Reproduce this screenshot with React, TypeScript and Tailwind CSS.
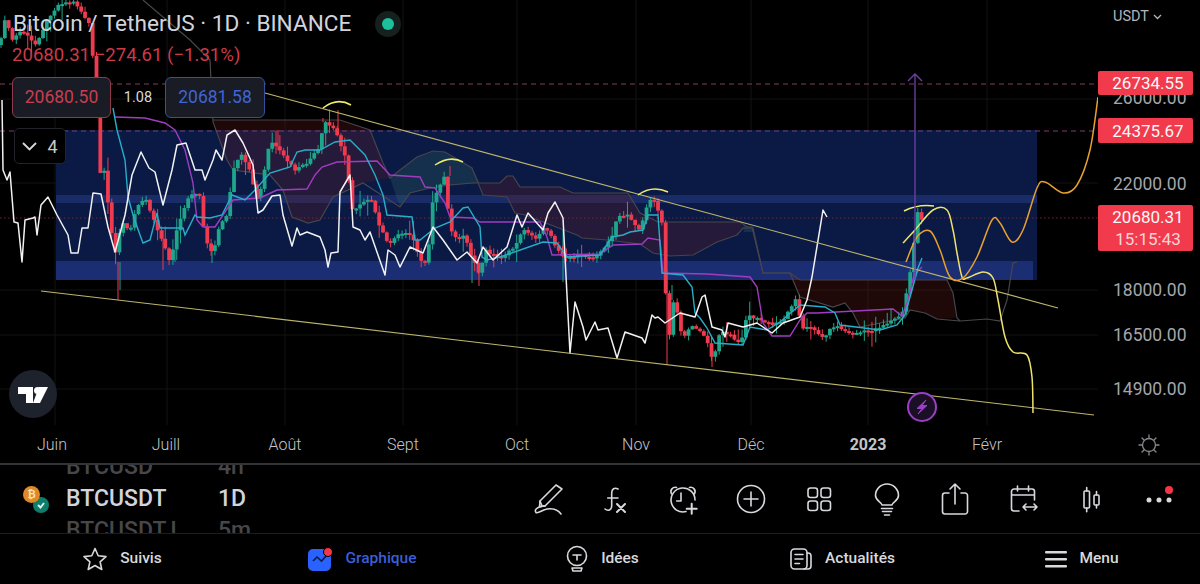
import React from 'react';

type Pt = [number, number];

const line = (pts: Pt[]) => 'M' + pts.map((p) => p.join(' ')).join('L');

// catmull-rom, for the hand drawn curves
const curve = (pts: Pt[]) => {
  let d = `M${pts[0][0]} ${pts[0][1]}`;
  for (let i = 0; i < pts.length - 1; i++) {
    const a = pts[i - 1] || pts[i];
    const b = pts[i];
    const c = pts[i + 1];
    const e = pts[i + 2] || c;
    d += `C${b[0] + (c[0] - a[0]) / 6} ${b[1] + (c[1] - a[1]) / 6} ${c[0] - (e[0] - b[0]) / 6} ${c[1] - (e[1] - b[1]) / 6} ${c[0]} ${c[1]}`;
  }
  return d;
};

const PRICE: Pt[] = [
  [0, 45], [5, 18], [12, 40], [22, 30], [35, 45], [50, 15], [60, 3], [75, 2], [90, 25], [98, 120], [100, 173], [105, 172], [110, 225], [118, 262], [120, 220],
  [130, 232], [137, 205], [145, 197], [152, 215], [160, 235], [170, 262], [178, 225], [190, 195], [200, 195], [205, 240], [213, 253], [220, 225],
  [228, 215], [232, 175], [240, 153], [250, 172], [258, 203], [266, 163], [270, 140], [280, 152], [295, 170], [305, 165], [318, 150], [325, 122],
  [335, 130], [345, 155], [353, 213], [358, 205], [370, 197], [380, 228], [390, 245], [400, 232], [412, 235], [423, 267], [428, 255], [433, 200],
  [445, 175], [450, 230], [460, 240], [465, 232], [470, 255], [480, 275], [485, 250], [500, 258], [512, 250], [525, 228], [535, 240], [545, 225],
  [555, 245], [565, 258], [580, 255], [592, 258], [605, 248], [612, 235], [617, 218], [627, 215], [640, 230], [648, 202], [655, 200], [662, 222],
  [665, 275], [668, 355], [672, 300], [678, 315], [683, 340], [690, 325], [700, 330], [708, 345], [713, 360], [720, 332], [730, 335], [740, 345],
  [747, 315], [760, 320], [773, 325], [785, 318], [797, 295], [801, 330], [812, 326], [822, 338], [835, 325], [850, 334], [863, 332], [873, 330],
  [887, 323], [897, 318], [903, 312], [907, 290], [911, 267], [915, 235], [918, 210], [922, 220],
];

const WHITE: Pt[] = [
  [2, 100], [3, 170], [7, 180], [10, 172], [14, 222], [18, 223], [22, 262], [25, 220], [33, 218], [35, 217], [37, 235], [41, 205], [48, 197], [57, 215],
  [68, 235], [71, 253], [78, 253], [82, 228], [88, 228], [93, 193], [101, 194], [108, 227], [115, 252], [125, 215], [132, 175], [141, 152], [149, 168],
  [155, 172], [163, 205], [172, 170], [177, 145], [186, 143], [195, 170], [202, 170], [205, 180], [213, 160], [216, 150], [222, 160], [227, 135], [235, 130],
  [243, 143], [253, 165], [258, 213], [263, 210], [272, 196], [280, 195], [283, 215], [292, 246], [297, 228], [300, 235], [307, 232], [320, 237], [325, 250],
  [328, 267], [331, 253], [338, 252], [340, 192], [350, 175], [353, 227], [360, 230], [365, 240], [370, 232], [378, 255], [385, 275], [388, 250], [395, 255],
  [400, 267], [410, 247], [423, 253], [433, 227], [443, 240], [450, 250], [457, 260], [467, 252], [477, 263], [483, 247], [493, 260], [507, 247], [517, 215],
  [522, 227], [528, 213], [543, 230], [548, 213], [555, 202], [563, 218], [570, 353], [575, 302], [583, 327], [586, 340], [595, 322], [598, 330], [608, 328],
  [617, 358], [625, 332], [642, 338], [645, 343], [652, 315], [655, 318], [658, 317], [665, 323], [680, 313], [695, 317], [702, 297], [705, 295], [712, 327],
  [722, 330], [725, 337], [728, 323], [743, 327], [757, 323], [772, 333], [783, 323], [800, 317], [807, 300], [812, 277], [823, 210], [827, 217],
];

const CYAN: Pt[] = [
  [113, 108], [117, 130], [125, 160], [128, 197], [133, 215], [140, 235], [143, 243], [150, 240], [157, 213], [160, 228], [183, 228], [185, 235], [195, 215],
  [197, 217], [210, 218], [222, 215], [232, 195], [245, 200], [255, 190], [270, 173], [290, 167], [297, 152], [305, 150], [320, 150], [335, 142], [350, 140],
  [365, 155], [375, 175], [383, 195], [387, 215], [412, 217], [415, 240], [420, 240], [435, 228], [450, 222], [463, 208], [468, 207], [480, 227], [482, 257],
  [487, 260], [500, 257], [543, 242], [557, 243], [567, 257], [600, 255], [612, 237], [623, 235], [630, 232], [643, 230], [648, 215], [658, 215], [662, 273],
  [683, 275], [692, 287], [695, 313], [700, 318], [707, 328], [715, 343], [743, 345], [750, 327], [767, 330], [780, 322], [800, 305], [825, 307], [835, 313],
  [840, 325], [880, 330], [897, 325], [905, 315], [912, 290], [918, 268], [922, 258],
];

const PURPLE: Pt[] = [
  [115, 117], [145, 118], [165, 123], [175, 130], [185, 150], [193, 183], [197, 220], [203, 227], [215, 227], [233, 200], [260, 198], [277, 190], [307, 189],
  [315, 175], [322, 167], [337, 162], [377, 161], [390, 175], [420, 177], [425, 187], [435, 188], [445, 203], [450, 217], [473, 218], [480, 222], [540, 222],
  [547, 237], [552, 255], [600, 254], [613, 245], [642, 244], [648, 238], [660, 240], [663, 273], [707, 274], [750, 277], [757, 287], [763, 323], [772, 336],
  [790, 336], [800, 320], [807, 313], [817, 313], [893, 309], [902, 316], [908, 300], [914, 275], [922, 267],
];

const CLOUD_A: Pt[] = [
  [143, 0], [190, 40], [210, 60], [213, 122], [227, 160], [233, 170], [270, 175], [283, 190], [292, 217], [308, 223], [320, 220], [333, 197], [363, 183],
  [400, 207], [410, 193], [430, 188], [450, 185], [472, 183], [500, 183], [507, 176], [513, 176], [520, 187], [560, 187], [573, 193], [628, 193], [640, 213],
  [658, 222], [740, 222], [747, 227], [752, 227], [763, 273], [790, 273], [800, 297], [833, 307], [845, 303], [853, 313], [860, 327], [905, 318], [910, 310],
  [925, 313], [937, 319], [960, 321], [987, 319], [1000, 321], [1007, 300], [1013, 263], [1017, 262],
];

const CLOUD_B: Pt[] = [
  [213, 120], [340, 120], [370, 130], [383, 163], [390, 178], [400, 170], [417, 157], [433, 151], [445, 152], [472, 168], [483, 195], [507, 197], [515, 213],
  [525, 215], [577, 235], [582, 238], [607, 240], [640, 244], [653, 253], [670, 256], [693, 255], [717, 242], [737, 235], [743, 228], [753, 228], [763, 273],
  [790, 273], [800, 280], [947, 280], [953, 293], [957, 318], [960, 321],
];

// cloud fills, the colour flips where the two spans cross
const CLOUD_FILLS: { pts: Pt[]; fill: string }[] = [
  {
    pts: [[213, 120], [340, 120], [370, 130], [383, 163], [390, 178], [363, 183], [333, 197], [320, 220], [308, 223], [292, 217], [283, 190], [270, 175], [233, 170], [227, 160]],
    fill: '#6a1c1c',
  },
  {
    pts: [[390, 178], [400, 170], [417, 157], [433, 151], [445, 152], [472, 168], [480, 183], [450, 185], [430, 188], [410, 193], [400, 207]],
    fill: '#2f6a62',
  },
  {
    pts: [[480, 183], [500, 183], [507, 176], [513, 176], [520, 187], [560, 187], [573, 193], [628, 193], [640, 213], [658, 222], [740, 222], [743, 228], [737, 235], [717, 242], [693, 255], [670, 256], [653, 253], [640, 244], [607, 240], [582, 238], [577, 235], [525, 215], [515, 213], [507, 197], [483, 195]],
    fill: '#6a1c1c',
  },
  { pts: [[743, 226], [752, 227], [754, 232], [744, 232]], fill: '#2f6a62' },
  {
    pts: [[790, 273], [800, 280], [947, 280], [953, 293], [957, 318], [937, 319], [925, 313], [910, 310], [905, 318], [860, 327], [853, 313], [845, 303], [833, 307], [800, 297]],
    fill: '#6a1c1c',
  },
];

const YELLOW: Pt[] = [
  [903, 243], [915, 230], [933, 210], [947, 210], [953, 230], [957, 253], [962, 277], [967, 278], [983, 272], [993, 278], [998, 300], [1005, 337], [1013, 352],
  [1027, 355], [1032, 377], [1033, 413],
];

const ORANGE: Pt[] = [
  [906, 262], [917, 237], [930, 231], [940, 250], [950, 277], [963, 278], [977, 257], [992, 220], [1000, 223], [1012, 242], [1023, 230], [1037, 188], [1045, 182],
  [1063, 193], [1077, 185], [1090, 150], [1098, 97],
];

const at = (x: number) => {
  for (let i = 0; i < PRICE.length - 1; i++) {
    const [x0, y0] = PRICE[i];
    const [x1, y1] = PRICE[i + 1];
    if (x <= x1) return y0 + ((y1 - y0) * (x - x0)) / (x1 - x0);
  }
  return PRICE[PRICE.length - 1][1];
};

const rnd = (i: number) => {
  const v = Math.sin(i * 12.9898) * 43758.5453;
  return v - Math.floor(v);
};

const GREEN_C = '#1fa58b';
const RED_C = '#ee3b50';

const candles = () => {
  const out: { x: number; top: number; h: number; hi: number; lo: number; up: boolean }[] = [];
  let prev = at(0);
  for (let i = 0; i * 3.82 + 1 < 923; i++) {
    const x = i * 3.82 + 1;
    const close = at(x) + (rnd(i) - 0.5) * 3;
    const up = close < prev;
    const top = Math.min(close, prev);
    const h = Math.max(Math.abs(close - prev), 2);
    const size = rnd(i + 400) > 0.75 ? 14 : 5;
    out.push({ x, top, h, hi: top - rnd(i + 100) * size, lo: top + h + rnd(i + 200) * size, up });
    prev = close;
  }
  return out;
};

const LONG_WICKS: [number, number, number, string][] = [
  [118, 262, 300, RED_C], [120, 262, 290, GREEN_C], [163, 230, 270, RED_C], [175, 250, 262, GREEN_C], [212, 250, 263, GREEN_C],
  [323, 122, 118, RED_C], [338, 110, 130, RED_C], [278, 130, 150, RED_C], [450, 166, 176, RED_C], [472, 250, 283, GREEN_C],
  [479, 270, 286, RED_C], [563, 230, 282, GREEN_C], [667, 270, 365, RED_C], [672, 285, 300, GREEN_C], [712, 355, 367, RED_C],
];

const ChartDrawing: React.FC = () => (
  <svg width="1098" height="425" viewBox="0 0 1098 425" className="block" fill="none">
    {[99, 183, 290, 335, 389].map((y) => (
      <path key={y} d={`M0 ${y}H1098`} stroke="#121212" />
    ))}
    {[55, 167, 285, 403, 517, 636, 751, 868, 987].map((x) => (
      <path key={x} d={`M${x} 0V425`} stroke="#121212" />
    ))}

    <rect x="56" y="130" width="981" height="150" fill="#0a1a45" />
    <rect x="56" y="195" width="981" height="8" fill="#1a2c68" />
    <rect x="56" y="261" width="977" height="19" fill="#1b2e74" />

    {CLOUD_FILLS.map((c, i) => (
      <path key={i} d={line(c.pts) + 'Z'} fill={c.fill} fillOpacity="0.28" />
    ))}
    <path d={line(CLOUD_A)} stroke="#47474c" strokeWidth="1.2" />
    <path d={line(CLOUD_B)} stroke="#47434c" strokeWidth="1.2" />

    <path d="M0 84H1098" stroke="#7e3d5c" strokeDasharray="5 4" />
    <path d="M0 131H1098" stroke="#7e3d6c" strokeDasharray="5 4" />
    <path d="M0 218H1098" stroke="#6e2633" strokeDasharray="1.5 2.5" />

    {LONG_WICKS.map(([x, a, b, c], i) => (
      <path key={i} d={`M${x} ${a}V${b}`} stroke={c} />
    ))}
    {candles().map((k, i) => (
      <g key={i}>
        <path d={`M${k.x} ${k.hi}V${k.lo}`} stroke={k.up ? GREEN_C : RED_C} />
        <rect x={k.x - 1.9} y={k.top} width="3.8" height={k.h} fill={k.up ? GREEN_C : RED_C} />
      </g>
    ))}

    <path d={line(PURPLE)} stroke="#a03cc0" strokeWidth="1.4" />
    <path d={line(CYAN)} stroke="#28aec8" strokeWidth="1.4" />
    <path d={line(WHITE)} stroke="#f2f2f2" strokeWidth="1.5" strokeLinejoin="round" />

    <path d="M265 93L1058 308" stroke="#bdb56c" strokeWidth="1.1" />
    <path d="M41 291L1094 415" stroke="#bdb56c" strokeWidth="1.1" />
    <path d="M323 108Q337 97 351 105M435 165Q450 155 463 162M638 195Q652 185 668 192M904 211Q918 204 934 206" stroke="#ecec6a" strokeWidth="1.5" />
    <path d={curve(YELLOW)} stroke="#eee36e" strokeWidth="1.5" />
    <path d={curve(ORANGE)} stroke="#e8a02e" strokeWidth="1.5" />

    <path d="M915 280V74M908 81L915 74L922 81" stroke="#6f40a8" strokeWidth="1.3" />

    <circle cx="922" cy="407" r="14" fill="#1a0f24" stroke="#9a3fc6" strokeWidth="2" />
    <path d="M926 400L917 408.5H922L918 414L927 405.5H922Z" fill="#9a3fc6" stroke="#9a3fc6" strokeLinejoin="round" />
  </svg>
);

const TvLogo = () => (
  <svg width="48" height="48" viewBox="0 0 48 48">
    <circle cx="24" cy="24" r="24" fill="#1e222d" />
    <path d="M9 17H24V33H17V24H9ZM30 17H39L31 33H24Z" fill="#fff" />
    <circle cx="28.5" cy="20.5" r="3.5" fill="#fff" />
  </svg>
);

const Ico: React.FC<{ w?: number; h?: number; children: React.ReactNode; color?: string }> = ({ w = 32, h = 32, children, color = '#d8d9dd' }) => (
  <svg width={w} height={h} viewBox={`0 0 ${w} ${h}`} fill="none" stroke={color} strokeWidth="1.6" strokeLinecap="round" strokeLinejoin="round">
    {children}
  </svg>
);

const BOTTOM_TOOLS: { key: string; icon: React.ReactNode }[] = [
  {
    key: 'fx',
    icon: (
      <Ico>
        <path d="M19 6C15.500 4 12.700 6 12.700 10V23C12.700 27 9 28.500 6 26M8.700 15H19" />
        <path d="M18 21L26 29M26 21L18 29" strokeWidth="2" />
      </Ico>
    ),
  },
  {
    key: 'alarm',
    icon: (
      <Ico>
        <path d="M19 28.600A12 12 0 1 1 28 17" />
        <path d="M14 10V18H9.700M4.500 11C2.500 7 6 3.500 9.500 4.500M27.500 11C29.500 7 26 3.500 22.500 4.500" />
        <path d="M24.700 20.700V30.700M19.700 25.700H29.700" strokeWidth="2" />
      </Ico>
    ),
  },
  {
    key: 'add',
    icon: (
      <Ico>
        <circle cx="16" cy="16" r="13.500" />
        <path d="M16 9V23M9 16H23" />
      </Ico>
    ),
  },
  {
    key: 'grid',
    icon: (
      <Ico>
        <rect x="5" y="5" width="9.500" height="9.500" rx="2.500" />
        <rect x="18" y="5" width="9.500" height="9.500" rx="2.500" />
        <rect x="5" y="18" width="9.500" height="9.500" rx="2.500" />
        <rect x="18" y="18" width="9.500" height="9.500" rx="2.500" />
      </Ico>
    ),
  },
  {
    key: 'bulb',
    icon: (
      <Ico h={36}>
        <path d="M11 24C11 21 4.500 20 4.500 14.500A11.500 11.500 0 0 1 27.500 14.500C27.500 20 21 21 21 24Z" />
        <path d="M10.500 27.500H21.500M11.500 30.500H20.500M13.500 34H18.500" />
      </Ico>
    ),
  },
  {
    key: 'share',
    icon: (
      <Ico h={36}>
        <path d="M10 12H6A2.500 2.500 0 0 0 3.500 14.500V30.500A2.500 2.500 0 0 0 6 33H26A2.500 2.500 0 0 0 28.500 30.500V14.500A2.500 2.500 0 0 0 26 12H22" />
        <path d="M16 23V3M11 8L16 3L21 8" />
      </Ico>
    ),
  },
  {
    key: 'range',
    icon: (
      <Ico>
        <path d="M12 28H7A2.500 2.500 0 0 1 4.500 25.500V8.500A2.500 2.500 0 0 1 7 6H25A2.500 2.500 0 0 1 27.500 8.500V17M4.500 12H27.500M10.500 3V8M21.500 3V8" />
        <path d="M16 24H30M19 21L16 24L19 27M27 21L30 24L27 27" />
      </Ico>
    ),
  },
  {
    key: 'candles',
    icon: (
      <Ico>
        <rect x="9" y="8" width="5.500" height="17" rx="1" />
        <path d="M11.700 4.500V8M11.700 25V28.700" />
        <rect x="19" y="12" width="5" height="10" rx="1" />
        <path d="M21.500 8.500V12M21.500 22V25" />
      </Ico>
    ),
  },
  {
    key: 'more',
    icon: (
      <svg width="32" height="32" viewBox="0 0 32 32">
        <circle cx="6" cy="17" r="2.500" fill="#d8d9dd" />
        <circle cx="16" cy="17" r="2.500" fill="#d8d9dd" />
        <circle cx="26" cy="17" r="2.500" fill="#d8d9dd" />
        <circle cx="26" cy="7" r="4" fill="#f23645" />
      </svg>
    ),
  },
];

const PRICE_TICKS = [
  { label: '26000.00', cls: 'mt-[61px]' },
  { label: '22000.00', cls: 'mt-[66px]' },
  { label: '18000.00', cls: 'mt-[86px]' },
  { label: '16500.00', cls: 'mt-[25px]' },
  { label: '14900.00', cls: 'mt-[34px]' },
];

const MONTHS = [
  { label: 'Juin', cls: 'w-[104px]' },
  { label: 'Juill', cls: 'w-[124px]' },
  { label: 'Août', cls: 'w-[114px]' },
  { label: 'Sept', cls: 'w-[122px]' },
  { label: 'Oct', cls: 'w-[106px]' },
  { label: 'Nov', cls: 'w-[132px]' },
  { label: 'Déc', cls: 'w-[98px]' },
  { label: '2023', cls: 'w-[136px] font-bold' },
  { label: 'Févr', cls: 'w-[102px]' },
];

const PriceTag: React.FC<{ cls: string; children: React.ReactNode }> = ({ cls, children }) => (
  <div className={`absolute left-0 w-[95px] rounded-[2px] bg-[#f23a4d] pl-[5px] text-center text-[17px] leading-[22px] text-[#f8f8f8] ${cls}`}>{children}</div>
);

const TAB_TEXT = 'text-[15.500px] font-medium text-[#d8d9dd]';

const App: React.FC = () => (
  <div className="flex h-[584px] w-[1200px] flex-col overflow-hidden bg-black font-['Roboto',sans-serif]">
    <section className="flex h-[425px] shrink-0">
      <div className="relative h-full w-[1098px] overflow-hidden">
        <ChartDrawing />

        <div className="absolute left-[13px] top-[9px] flex items-center text-[22.600px] leading-[30px] text-[#d1d4dc]">
          <span>Bitcoin / TetherUS · 1D · BINANCE</span>
          <span className="ml-[24px] flex h-[26px] w-[26px] items-center justify-center rounded-full bg-[#16211f]">
            <span className="h-[12px] w-[12px] rounded-full bg-[#1cc09a]" />
          </span>
        </div>
        <div className="absolute left-[12px] top-[44px] text-[18.600px] leading-[22px] text-[#cc3a48]">20680.31 −274.61 (−1.31%)</div>

        <div className="absolute left-[12px] top-[77px] flex items-center">
          <div className="flex h-[41px] w-[99px] items-center justify-center rounded-[6px] border border-[#8f3a48] bg-[#191c25] text-[17.500px] text-[#c93c4e]">20680.50</div>
          <div className="w-[54px] text-center text-[14.500px] text-[#d8d9dd]">1.08</div>
          <div className="flex h-[41px] w-[100px] items-center justify-center rounded-[6px] border border-[#34509f] bg-[#191c25] text-[17.500px] text-[#3f64d6]">20681.58</div>
        </div>

        <div className="absolute left-[14px] top-[128px] flex h-[36px] w-[52px] items-center justify-center gap-[10px] rounded-[5px] border border-[#222429] bg-black text-[18px] text-[#c8c9cd]">
          <svg width="15" height="9" viewBox="0 0 15 9" fill="none" stroke="#d8d9dd" strokeWidth="1.800">
            <path d="M1 1L7.500 7.500L14 1" />
          </svg>
          <span>4</span>
        </div>

        <div className="absolute left-[9px] top-[370px]">
          <TvLogo />
        </div>
      </div>

      <div className="relative flex-1">
        <div className="flex flex-col items-start pl-[15px]">
          <div className="mt-[7px] flex h-[20px] items-center gap-[4px] text-[14.500px] text-[#b2b5be]">
            USDT
            <svg width="9" height="6" viewBox="0 0 9 6" fill="none" stroke="#b2b5be" strokeWidth="1.300">
              <path d="M1 1L4.500 4.500L8 1" />
            </svg>
          </div>
          {PRICE_TICKS.map((t) => (
            <div key={t.label} className={`h-[20px] text-[17.500px] leading-[20px] text-[#a3a6ac] ${t.cls}`}>
              {t.label}
            </div>
          ))}
        </div>
        <PriceTag cls="top-[71px]">
          <div className="py-[1px]">26734.55</div>
        </PriceTag>
        <PriceTag cls="top-[118px]">
          <div className="py-[1.500px]">24375.67</div>
        </PriceTag>
        <PriceTag cls="top-[205px]">
          <div className="pt-[1px]">20680.31</div>
          <div className="pb-[1px] text-[#f6d5d8]">15:15:43</div>
        </PriceTag>
      </div>
    </section>

    <div className="flex h-[38px] shrink-0 items-center pt-[2px] text-[16px] font-light text-[#c3c5ca]">
      {MONTHS.map((m) => (
        <div key={m.label} className={`text-center ${m.cls}`}>
          {m.label}
        </div>
      ))}
      <div className="ml-[99px]">
        <svg width="24" height="24" viewBox="0 0 24 24" fill="none" stroke="#85878c" strokeWidth="1.300" strokeLinecap="round">
          <circle cx="12" cy="12" r="6.500" />
          <path d="M12 2V5M12 19V22M2 12H5M19 12H22M5 5L7 7M17 17L19 19M5 19L7 17M17 7L19 5" />
        </svg>
      </div>
    </div>

    <div className="h-[2px] shrink-0 bg-[#333438]" />

    <div className="flex h-[68px] shrink-0 items-center overflow-hidden">
      <div className="relative ml-[22px] h-[36px] w-[28px] shrink-0">
        <span className="absolute bottom-[4px] right-[1px] flex h-[16px] w-[16px] items-center justify-center rounded-full bg-[#0f7d6b]">
          <svg width="10" height="10" viewBox="0 0 10 10" fill="none" stroke="#d9f2ec" strokeWidth="2">
            <path d="M2 5L4.500 7.500L8 3" />
          </svg>
        </span>
        <span className="absolute left-[1px] top-[5px] flex h-[17px] w-[17px] items-center justify-center rounded-full bg-[#df8a2a] text-[10px] font-bold text-[#fbe3c0]">₿</span>
      </div>
      <div className="ml-[16px] grid w-[152px] shrink-0 grid-cols-[152px_60px] gap-y-[4px] text-[23px] font-medium leading-[28px]">
        <div className="text-[#46474b]">BTCUSD</div>
        <div className="text-[#46474b]">4h</div>
        <div className="text-[#d1d4dc]">BTCUSDT</div>
        <div className="text-[#d1d4dc]">1D</div>
        <div className="text-[#46474b]">BTCUSDT.I</div>
        <div className="text-[#46474b]">5m</div>
      </div>
      <div className="ml-[314px] shrink-0">
        <Ico>
          <path d="M10 23L8 18L24 2L30 6L13 23Z" />
          <path d="M8 18L7.500 23.500L13 23" />
          <path d="M10 23.500C5 24 2 27 4 29.500C6 31 10 27 15 26C21 25 26 27 29 31" />
        </Ico>
      </div>
      <div className="ml-[35px] flex shrink-0 items-center gap-[36px]">
        {BOTTOM_TOOLS.map((t) => (
          <div key={t.key}>{t.icon}</div>
        ))}
      </div>
    </div>

    <div className="h-px shrink-0 bg-[#1c1d21]" />

    <nav className="grid flex-1 grid-cols-[repeat(5,240px)] pl-[2px]">
      <div className="flex items-center justify-center gap-[12px]">
        <Ico w={26} h={26}>
          <path d="M13 2.500L16.200 9.800L24 10.600L18.100 15.800L19.800 23.500L13 19.500L6.200 23.500L7.900 15.800L2 10.600L9.800 9.800Z" />
        </Ico>
        <span className={TAB_TEXT}>Suivis</span>
      </div>
      <div className="flex items-center justify-center gap-[12px]">
        <svg width="26" height="26" viewBox="0 0 26 26">
          <rect x="1" y="3" width="23" height="22" rx="5" fill="#2962ff" />
          <path d="M6 15L10 11L14.500 15L19 10" fill="none" stroke="#0b1a40" strokeWidth="1.600" />
          <circle cx="21" cy="6" r="4.500" fill="#f23645" stroke="#000" />
        </svg>
        <span className="text-[15.500px] font-medium text-[#3a5fd8]">Graphique</span>
      </div>
      <div className="flex items-center justify-center gap-[12px]">
        <Ico w={24} h={30}>
          <circle cx="12" cy="12" r="9.500" />
          <path d="M8 11H16M12 11V16M7 24H17L16 27H8Z" />
        </Ico>
        <span className={TAB_TEXT}>Idées</span>
      </div>
      <div className="flex items-center justify-center gap-[12px]">
        <Ico w={24} h={26}>
          <rect x="2" y="3" width="16" height="20" rx="3.500" />
          <path d="M18 7H19A3 3 0 0 1 22 10V20A3 3 0 0 1 19 23H15M6 8.500H14M6 13H14M6 17.500H10.500" />
        </Ico>
        <span className={TAB_TEXT}>Actualités</span>
      </div>
      <div className="flex items-center justify-center gap-[12px]">
        <svg width="22" height="18" viewBox="0 0 22 18" fill="#d8d9dd">
          <rect y="1" width="22" height="2.400" rx="1" />
          <rect y="8" width="22" height="2.400" rx="1" />
          <rect y="15" width="22" height="2.400" rx="1" />
        </svg>
        <span className={TAB_TEXT}>Menu</span>
      </div>
    </nav>
  </div>
);

export default App;
